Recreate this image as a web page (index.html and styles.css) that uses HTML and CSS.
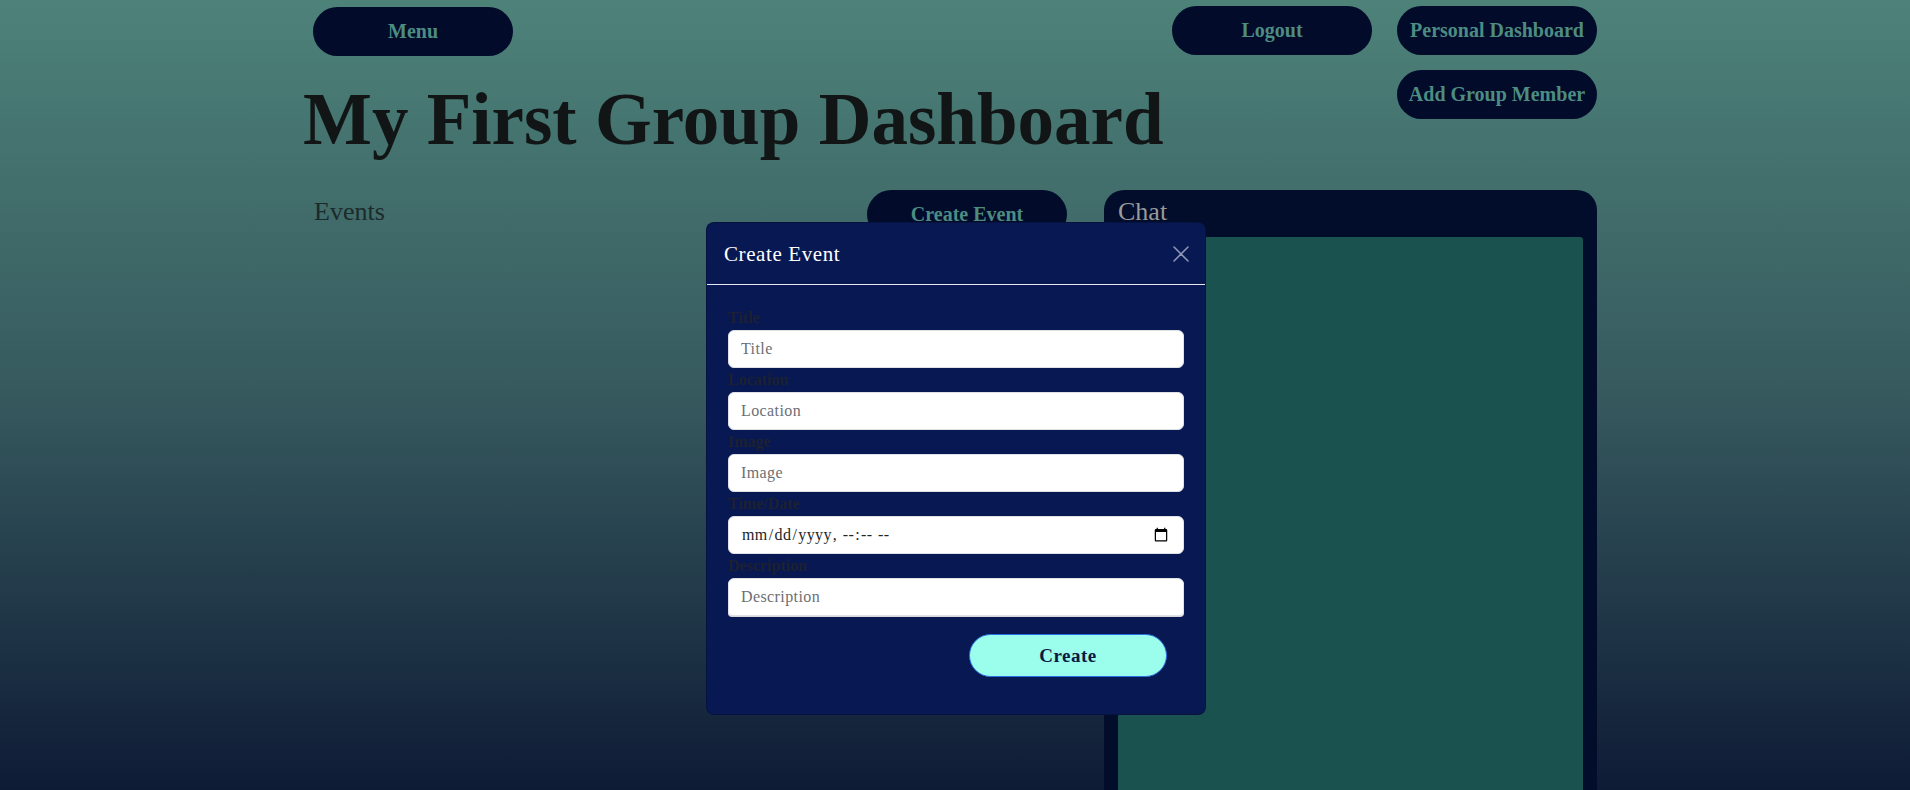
FILE: index.html
```html
<!DOCTYPE html>
<html lang="en">
<head>
<meta charset="utf-8">
<title>My First Group Dashboard</title>
<link rel="stylesheet" href="styles.css">
</head>
<body>
<div class="page">
  <div class="container">
    <div class="top-row">
      <button class="pill menu">Menu</button>
      <div class="top-right">
        <button class="pill">Logout</button>
        <button class="pill">Personal Dashboard</button>
      </div>
    </div>
    <div class="title-row">
      <h1 class="title">My First Group Dashboard</h1>
      <button class="pill">Add Group Member</button>
    </div>
    <div class="main-row">
      <section class="events">
        <div class="events-head">
          <h2 class="events-title">Events</h2>
          <button class="pill">Create Event</button>
        </div>
      </section>
      <section class="chat">
        <h2 class="chat-title">Chat</h2>
        <div class="chat-body"></div>
      </section>
    </div>
  </div>

  <div class="modal">
    <div class="modal-header">
      <h3 class="modal-title">Create Event</h3>
      <button class="close" aria-label="Close">
        <svg width="16" height="16" viewBox="0 0 16 16"><path d="M1 1 L15 15 M15 1 L1 15" stroke="currentColor" stroke-width="1.6" stroke-linecap="round" fill="none"/></svg>
      </button>
    </div>
    <form class="modal-body">
      <label class="lbl">Title</label>
      <input class="field" type="text" placeholder="Title">
      <label class="lbl">Location</label>
      <input class="field" type="text" placeholder="Location">
      <label class="lbl">Image</label>
      <input class="field" type="text" placeholder="Image">
      <label class="lbl">Time/Date</label>
      <input class="field" type="datetime-local">
      <label class="lbl">Description</label>
      <textarea class="field area" rows="1" placeholder="Description"></textarea>
      <div class="actions">
        <button type="button" class="create">Create</button>
      </div>
    </form>
  </div>
</div>
</body>
</html>
```
FILE: styles.css
```css
* { box-sizing: border-box; }
html, body { margin: 0; padding: 0; height: 100%; }
body {
  font-family: "Liberation Serif", "Times New Roman", serif;
  color: #212529;
  overflow: hidden;
}
.page {
  position: relative;
  height: 790px;
  background: linear-gradient(180deg, #4d8279 0%, #36595e 50%, #0e1b35 100%);
  overflow: hidden;
}
.container {
  width: 1284px;
  margin: 0 auto;
  padding-top: 6px;
}
.pill {
  width: 200px;
  height: 49px;
  border: none;
  border-radius: 25px;
  background: #020b2a;
  color: #4d8c81;
  font-family: "Liberation Serif", serif;
  font-weight: bold;
  font-size: 20px;
  cursor: pointer;
  padding: 0;
}
.menu { margin-top: 1px; }
.top-row {
  display: flex;
  justify-content: space-between;
  align-items: flex-start;
}
.top-right {
  display: flex;
  gap: 25px;
}
.title-row {
  display: flex;
  justify-content: space-between;
  align-items: flex-start;
  margin-top: 14px;
}
.title {
  margin: 7px 0 0 -10px;
  font-size: 73px;
  line-height: 86px;
  font-weight: bold;
  color: #121515;
}
.main-row {
  display: flex;
  gap: 37px;
  margin-top: 27px;
}
.events { width: 754px; }
.events-head {
  display: flex;
  justify-content: space-between;
  align-items: flex-start;
}
.events-title {
  margin: 7px 0 0 1px;
  font-size: 26px;
  font-weight: normal;
  line-height: 30px;
  color: #1b2a2a;
}
.chat {
  width: 493px;
  height: 700px;
  background: #020d2b;
  border-radius: 20px;
  padding: 0 14px;
}
.chat-title {
  margin: 0;
  padding: 7px 0 0 0;
  font-size: 26px;
  line-height: 30px;
  font-weight: normal;
  color: #9a9a9a;
  height: 47px;
}
.chat-body {
  background: #1a5250;
  height: 650px;
  border-radius: 3px 3px 0 0;
}
.modal {
  position: absolute;
  left: 706px;
  top: 222px;
  width: 500px;
  height: 493px;
  background: #081852;
  border: 1px solid rgba(0,0,0,.2);
  border-radius: 8px;
}
.modal-header {
  display: flex;
  justify-content: space-between;
  align-items: center;
  padding: 16px 16px 15px 17px;
  border-bottom: 1px solid #e8e8f0;
}
.modal-title {
  margin: 0;
  font-size: 21px;
  line-height: 30px;
  font-weight: normal;
  color: #ffffff;
  letter-spacing: 0.6px;
}
.close {
  background: none;
  border: none;
  padding: 0;
  width: 16px;
  height: 16px;
  color: #8d95b5;
  cursor: pointer;
}
.close svg { display: block; }
.modal-body {
  display: flex;
  flex-direction: column;
  padding: 21px 21px 0 21px;
}
.lbl {
  font-size: 16px;
  line-height: 24px;
  font-weight: bold;
  color: #1c2130;
}
.field {
  display: block;
  width: 456px;
  height: 38px;
  padding: 6px 12px;
  font-family: "Liberation Serif", serif;
  font-size: 16px;
  line-height: 24px;
  color: #212529;
  background: #fff;
  border: 1px solid #dee2e6;
  border-radius: 6px;
  letter-spacing: 0.4px;
}
.field::placeholder { color: #6c6f74; }
.area {
  resize: none;
  overflow: hidden;
  box-shadow: 0 1px 0 #d8d8dc;
  border-bottom-left-radius: 4px;
  border-bottom-right-radius: 4px;
}
.actions {
  display: flex;
  justify-content: flex-end;
  padding-right: 17px;
  margin-top: 18px;
}
.create {
  width: 198px;
  height: 43px;
  border-radius: 22px;
  background: #9bfdec;
  border: 1px solid #2a6fe0;
  color: #0b1a45;
  font-family: "Liberation Serif", serif;
  font-weight: bold;
  font-size: 19px;
  letter-spacing: 0.5px;
  cursor: pointer;
}
```
